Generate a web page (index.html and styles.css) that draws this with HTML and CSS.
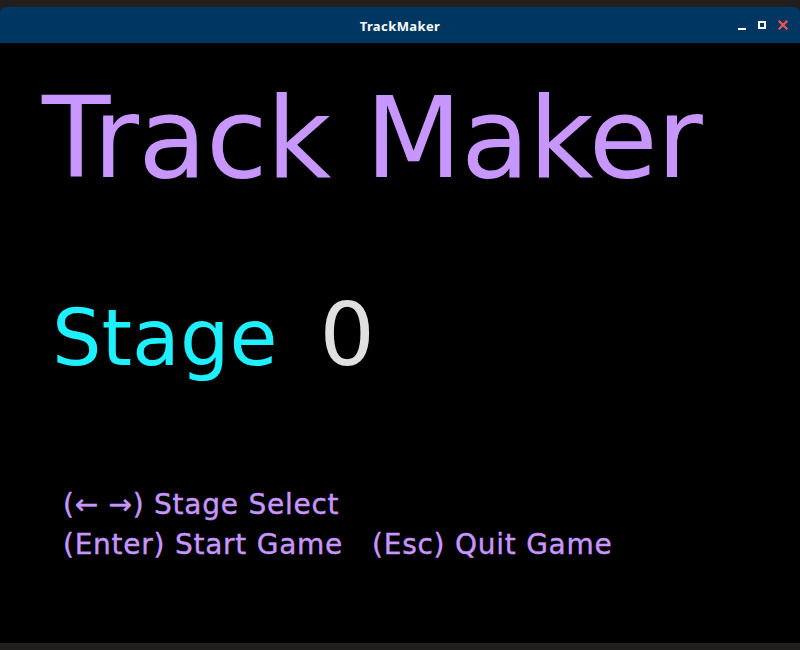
FILE: index.html
```html
<!DOCTYPE html>
<html>
<head>
<meta charset="utf-8">
<link rel="stylesheet" href="styles.css">
</head>
<body>
<div class="topstrip"></div>
<div class="window">
  <div class="titlebar">
    <span class="wtitle">TrackMaker</span>
    <div class="controls">
      <span class="btn-min"></span>
      <span class="btn-max"></span>
      <svg class="btn-close" width="10" height="10" viewBox="0 0 10 10"><path d="M1.5 1.5 L8.5 8.5 M8.5 1.5 L1.5 8.5" stroke="#f05454" stroke-width="2.2" stroke-linecap="square"/></svg>
    </div>
  </div>
  <div class="content">
    <div class="title">Track Maker</div>
    <div class="stage-row">
      <span class="stage-label">Stage</span>
      <span class="stage-num">0</span>
    </div>
    <div class="help">
      <div class="help-line">(← →) Stage Select</div>
      <div class="help-line">(Enter) Start Game&nbsp;&nbsp;&nbsp;(Esc) Quit Game</div>
    </div>
  </div>
</div>
<div class="bottomstrip"></div>
</body>
</html>
```
FILE: styles.css
```css
html, body {
  margin: 0;
  padding: 0;
  background: #221e1b;
  width: 800px;
  height: 650px;
  overflow: hidden;
}
.topstrip { height: 7px; }
.bottomstrip { height: 7px; }
.window {
  display: flex;
  flex-direction: column;
  height: 636px;
}
.titlebar {
  height: 36px;
  background: #003662;
  border-radius: 6px 6px 0 0;
  position: relative;
  display: flex;
  align-items: center;
  justify-content: center;
}
.wtitle {
  font-family: "Noto Sans", sans-serif;
  font-weight: bold;
  font-size: 13px;
  color: #ffffff;
  letter-spacing: 0.4px;
  margin-top: 1px;
}
.controls {
  position: absolute;
  right: 12px;
  top: 0;
  height: 36px;
  display: flex;
  align-items: center;
  gap: 12px;
}
.btn-min {
  width: 8px;
  height: 2px;
  background: #fff;
  margin-top: 8px;
}
.btn-max {
  width: 4px;
  height: 4px;
  border: 2px solid #fff;
}
.btn-close { display: block; }
.content {
  flex: 1;
  background: #000;
  font-family: "DejaVu Sans", sans-serif;
  padding-left: 42px;
}
.title {
  font-size: 112px;
  line-height: 112px;
  color: #c896ff;
  margin-top: 39px;
  letter-spacing: -0.9px;
  white-space: nowrap;
}
.stage-row {
  display: flex;
  align-items: baseline;
  margin-top: 93px;
  padding-left: 10px;
  gap: 42px;
}
.stage-label {
  font-size: 78px;
  line-height: 96px;
  color: #1ef0ff;
}
.stage-num {
  font-size: 87px;
  line-height: 96px;
  color: #e0e0e0;
}
.help {
  margin-top: 99px;
  padding-left: 21px;
  color: #c896ff;
  font-size: 28px;
  line-height: 40px;
  letter-spacing: 0.75px;
  -webkit-text-stroke: 0.4px #c896ff;
  white-space: nowrap;
}
```
